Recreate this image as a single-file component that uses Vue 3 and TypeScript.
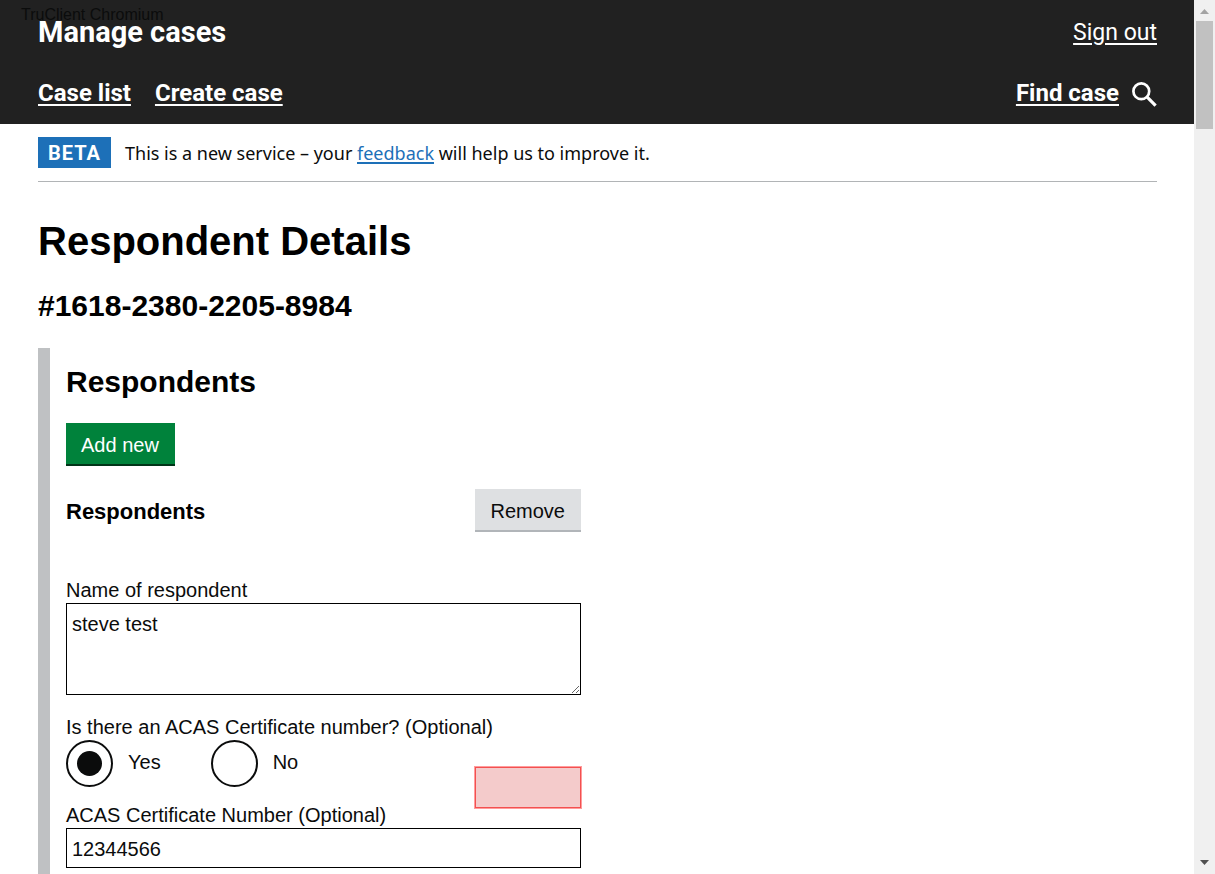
<script setup lang="ts">
import { ref } from 'vue'

const respondentName = ref('steve test')
const hasCertificate = ref('Yes')
const certificateNumber = ref('12344566')
const options: string[] = ['Yes', 'No']
</script>

<template>
  <div class="window">
    <div class="page">
      <header class="header">
        <span class="client-tag">TruClient Chromium</span>
        <div class="header-row">
          <span class="service">Manage cases</span>
          <a class="sign-out" href="#">Sign out</a>
        </div>
        <nav class="header-row nav">
          <div class="links">
            <a href="#">Case list</a>
            <a href="#">Create case</a>
          </div>
          <a class="find" href="#">
            <span>Find case</span>
            <svg width="25" height="27" viewBox="0 0 25 27" aria-hidden="true">
              <circle cx="9.3" cy="11.3" r="7.9" fill="none" stroke="#fff" stroke-width="2.7" />
              <path d="M15.2 17.2 L23.6 25.6" stroke="#fff" stroke-width="3.2" />
            </svg>
          </a>
        </nav>
      </header>

      <div class="banner">
        <strong class="tag">BETA</strong>
        <p>This is a new service – your <a href="#">feedback</a> will help us to improve it.</p>
      </div>

      <main>
        <h1>Respondent Details</h1>
        <h2 class="reference">#1618-2380-2205-8984</h2>

        <form class="panel" @submit.prevent>
          <h2 class="panel-title">Respondents</h2>
          <button type="button" class="button add">Add new</button>

          <div class="item">
            <div class="item-head">
              <h3>Respondents</h3>
              <button type="button" class="button remove">Remove</button>
            </div>

            <label for="name">Name of respondent</label>
            <textarea id="name" v-model="respondentName"></textarea>

            <fieldset>
              <legend>Is there an ACAS Certificate number? (Optional)</legend>
              <div class="radios">
                <label v-for="option in options" :key="option" class="radio">
                  <input v-model="hasCertificate" type="radio" name="certificate" :value="option" />
                  <span>{{ option }}</span>
                </label>
                <div class="highlight"></div>
              </div>
            </fieldset>

            <label for="number">ACAS Certificate Number (Optional)</label>
            <input id="number" v-model="certificateNumber" class="text" type="text" />
          </div>
        </form>
      </main>
    </div>

    <div class="scrollbar" aria-hidden="true">
      <svg class="arrow" width="9" height="5" viewBox="0 0 9 5"><path d="M0 5 L4.5 0 L9 5 Z" fill="#a3a3a3" /></svg>
      <div class="thumb"></div>
      <svg class="arrow down" width="9" height="5" viewBox="0 0 9 5"><path d="M0 0 L4.5 5 L9 0 Z" fill="#505050" /></svg>
    </div>
  </div>
</template>

<style>
body {
  background: #fff;
}
</style>

<style scoped>
* {
  box-sizing: border-box;
}
.window {
  display: flex;
  height: 100vh;
  overflow: hidden;
  color: #0b0c0c;
  font: 20px/25px "Liberation Sans", Arial, sans-serif;
}
.page {
  flex: 1;
  min-width: 0;
  overflow: hidden;
}
.header {
  position: relative;
  display: flex;
  flex-direction: column;
  gap: 28px;
  padding: 16px 37px 14px 38px;
  background: #212121;
  color: #fff;
  font-family: Roboto, sans-serif;
}
.client-tag {
  position: absolute;
  top: 5px;
  left: 21px;
  color: #0b0c0c;
  font: 16px/20px "Liberation Sans", Arial, sans-serif;
}
.header-row {
  position: relative;
  display: flex;
  justify-content: space-between;
  align-items: center;
  height: 32px;
}
.header a {
  color: #fff;
  text-decoration-thickness: 2px;
  text-underline-offset: 3px;
}
.service {
  font-size: 29px;
  font-weight: 700;
}
.sign-out {
  font-size: 23px;
}
.nav {
  height: 34px;
  font-size: 24px;
  font-weight: 700;
}
.links {
  display: flex;
  gap: 24px;
}
.find {
  display: flex;
  align-items: center;
  gap: 13px;
}
.banner {
  display: flex;
  align-items: center;
  gap: 14px;
  margin: 0 37px 0 38px;
  padding: 13px 0;
  border-bottom: 1px solid #b1b4b6;
  font-family: "Noto Sans", sans-serif;
  font-size: 18px;
}
.banner p {
  margin: 0;
  padding-top: 2px;
}
.banner a {
  color: #1d70b8;
  text-decoration-thickness: 2px;
  text-underline-offset: 2px;
}
.tag {
  padding: 4px 10px 2px;
  background: #1d70b8;
  color: #fff;
  font: 700 20px/25px Roboto, sans-serif;
  letter-spacing: 1px;
}
main {
  padding: 34px 37px 0 38px;
}
h1,
h2,
h3 {
  margin: 0;
  color: #000;
  font-weight: 700;
}
h1 {
  font-size: 40px;
  line-height: 50px;
}
.reference {
  margin-top: 20px;
  font-size: 30px;
  line-height: 40px;
}
.panel {
  margin-top: 22px;
  padding: 16px 0 40px 16px;
  border-left: 12px solid #bfc1c3;
}
.panel-title {
  margin-bottom: 24px;
  font-size: 30px;
  line-height: 35px;
}
.button {
  height: 41px;
  border: 0;
  border-radius: 0;
  font: 20px/25px "Liberation Sans", Arial, sans-serif;
}
.add {
  padding: 3px 16px 0 15px;
  background: #00823b;
  box-shadow: 0 2px 0 #003418;
  color: #fff;
}
.remove {
  padding: 3px 16px 0;
  background: #dee0e2;
  box-shadow: 0 2px 0 #b1b5b9;
  color: #0b0c0c;
}
.item {
  max-width: 515px;
  margin-top: 25px;
}
.item-head {
  display: flex;
  justify-content: space-between;
  align-items: center;
  margin-bottom: 48px;
}
h3 {
  padding-top: 4px;
  font-size: 22px;
  line-height: 28px;
}
label {
  display: block;
}
textarea,
.text {
  display: block;
  width: 100%;
  border: 1px solid #000;
  border-radius: 0;
  background: #fff;
  color: #0b0c0c;
  font: 20px/25px "Liberation Sans", Arial, sans-serif;
}
textarea {
  height: 92px;
  padding: 8px 5px;
}
.text {
  height: 40px;
  padding: 7px 5px 5px;
}
fieldset {
  margin: 20px 0 16px;
  padding: 0;
  border: 0;
}
legend {
  padding: 0;
}
.radios {
  position: relative;
  display: flex;
  gap: 50px;
}
.radio {
  display: flex;
  gap: 15px;
}
.radio span {
  padding-top: 10px;
}
.radio input {
  display: grid;
  place-items: center;
  width: 47px;
  height: 47px;
  margin: 0;
  appearance: none;
  border: 2px solid #0b0c0c;
  border-radius: 50%;
  background: #fff;
}
.radio input:checked::before {
  content: "";
  width: 25px;
  height: 25px;
  border-radius: 50%;
  background: #0b0c0c;
}
.highlight {
  position: absolute;
  top: 26px;
  right: -1px;
  width: 108px;
  height: 43px;
  border: 1px solid #ff9c9c;
  background: #f4cbcb;
  box-shadow: inset 0 0 0 1px #f35050;
}
.scrollbar {
  display: flex;
  flex-direction: column;
  align-items: center;
  width: 21px;
  padding: 9px 2px;
  background: #f0f0f0;
}
.thumb {
  width: 100%;
  height: 108px;
  margin-top: 7px;
  background: #c1c1c1;
}
.down {
  margin-top: auto;
}
</style>
